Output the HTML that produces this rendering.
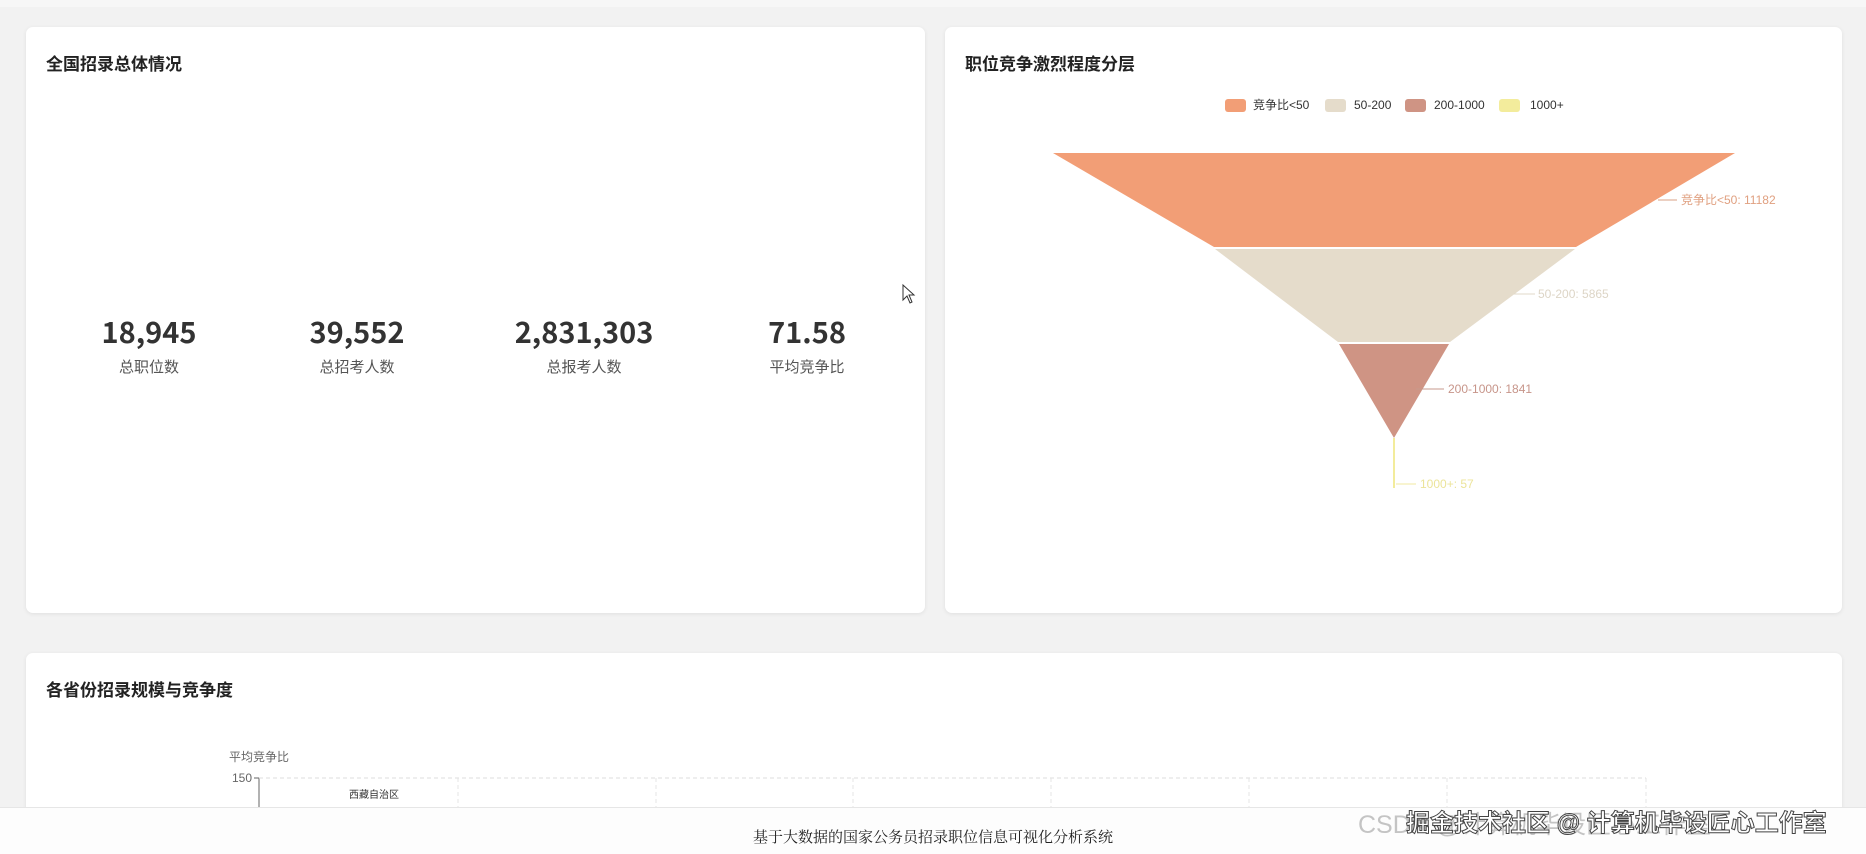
<!DOCTYPE html>
<html><head><meta charset="utf-8"><style>
*{margin:0;padding:0;box-sizing:border-box}
html,body{width:1866px;height:854px;overflow:hidden}
body{background:#f2f2f2;position:relative;font-family:"Liberation Sans","Noto Sans CJK SC",sans-serif;color:#333}
.card{position:absolute;background:#fff;border-radius:7px;box-shadow:0 1px 4px rgba(0,0,0,.08)}
.t{position:absolute;left:20px;top:23px;font-size:17px;font-weight:bold;color:#222;font-family:"Noto Sans CJK SC",sans-serif}
.stat{position:absolute;top:285px;width:220px;text-align:center;transform:translateX(-110px)}
.stat b{display:block;font-size:29px;color:#333;line-height:38px;font-family:"Noto Sans CJK SC","Liberation Sans",sans-serif}
.stat span{display:block;font-size:15px;color:#555;margin-top:6px;font-family:"Noto Sans CJK SC",sans-serif}
.abs{position:absolute;white-space:nowrap}
</style></head><body>
<div style="position:absolute;left:0;top:0;width:1866px;height:7px;background:#f7f7f7"></div>
<div class="card" style="left:26px;top:27px;width:899px;height:586px">
<div class="t">全国招录总体情况</div>
<div class="stat" style="left:123px"><b>18,945</b><span>总职位数</span></div>
<div class="stat" style="left:331px"><b>39,552</b><span>总招考人数</span></div>
<div class="stat" style="left:558px"><b>2,831,303</b><span>总报考人数</span></div>
<div class="stat" style="left:781px"><b>71.58</b><span>平均竞争比</span></div>
</div>
<div class="card" style="left:945px;top:27px;width:897px;height:586px">
<div class="t">职位竞争激烈程度分层</div>
</div>
<svg class="abs" style="left:0;top:0" width="1866" height="854">
<g font-family="Liberation Sans,Noto Sans CJK SC,sans-serif" font-size="12">
<rect x="1225" y="99" width="21" height="13" rx="3" fill="#f29e76"/><text x="1253" y="109" fill="#333">竞争比&lt;50</text>
<rect x="1325" y="99" width="21" height="13" rx="3" fill="#e5dccb"/><text x="1354" y="109" fill="#333">50-200</text>
<rect x="1405" y="99" width="21" height="13" rx="3" fill="#cf9484"/><text x="1434" y="109" fill="#333">200-1000</text>
<rect x="1499" y="99" width="21" height="13" rx="3" fill="#f3ec9c"/><text x="1530" y="109" fill="#333">1000+</text>
<polygon points="1053,153 1735,153 1576,247 1214,247" fill="#f29e76"/>
<polygon points="1215,249 1575,249 1450,342 1338,342" fill="#e5dccb"/>
<polygon points="1339,344 1449,344 1394,438" fill="#cf9484"/>
<line x1="1394" y1="438" x2="1394" y2="488" stroke="#f3ec9c" stroke-width="2"/>
<line x1="1658" y1="200" x2="1677" y2="200" stroke="#d9a085"/><text x="1681" y="204" fill="#e0a080">竞争比&lt;50: 11182</text>
<line x1="1514" y1="294" x2="1535" y2="294" stroke="#e0d8c8"/><text x="1538" y="298" fill="#ddd5c6">50-200: 5865</text>
<line x1="1416" y1="389" x2="1444" y2="389" stroke="#c79a8c"/><text x="1448" y="393" fill="#c7958a">200-1000: 1841</text>
<line x1="1396" y1="484" x2="1416" y2="484" stroke="#f0eaa0"/><text x="1420" y="488" fill="#ece49a">1000+: 57</text>
</g>
<path d="M903 285 L903 300 L907 296 L910 303 L912 302 L909 295 L914 295 Z" fill="#fff" stroke="#333" stroke-width="1"/>
</svg>
<div class="card" style="left:26px;top:653px;width:1816px;height:201px;border-radius:7px 7px 0 0">
<div class="t">各省份招录规模与竞争度</div>
</div>
<svg class="abs" style="left:0;top:0" width="1866" height="854">
<g font-family="Liberation Sans,Noto Sans CJK SC,sans-serif">
<text x="229" y="761" font-size="12" fill="#666">平均竞争比</text>
<text x="252" y="782" font-size="12" fill="#666" text-anchor="end">150</text>
<line x1="254" y1="778" x2="259" y2="778" stroke="#666"/>
<line x1="259" y1="778" x2="259" y2="810" stroke="#666"/>
<line x1="259" y1="778" x2="1646" y2="778" stroke="#ddd" stroke-dasharray="4,3"/>
<g stroke="#e4e4e4" stroke-dasharray="4,3"><line x1="458" y1="778" x2="458" y2="810"/><line x1="656" y1="778" x2="656" y2="810"/><line x1="853" y1="778" x2="853" y2="810"/><line x1="1051" y1="778" x2="1051" y2="810"/><line x1="1249" y1="778" x2="1249" y2="810"/><line x1="1447" y1="778" x2="1447" y2="810"/><line x1="1646" y1="778" x2="1646" y2="810"/></g>
<text x="374" y="798" font-size="10" fill="#333" text-anchor="middle">西藏自治区</text>
</g></svg>
<div style="position:absolute;left:0;top:807px;width:1866px;height:47px;background:#fdfdfd;border-top:1px solid #e6e6e6"></div>
<div class="abs" style="left:0;width:1866px;top:826px;text-align:center;font-family:'Liberation Serif','Noto Serif CJK SC',serif;font-size:15px;color:#222">基于大数据的国家公务员招录职位信息可视化分析系统</div>
<div class="abs" style="left:1358px;top:805px;font-size:25px;color:rgba(150,150,150,.55)">CSDN @计算机毕设匠心工作室</div>
<div class="abs" style="left:1406px;top:803px;font-size:24px;color:#fff;-webkit-text-stroke:1px #444;font-weight:bold">掘金技术社区 @ 计算机毕设匠心工作室</div>
</body></html>
